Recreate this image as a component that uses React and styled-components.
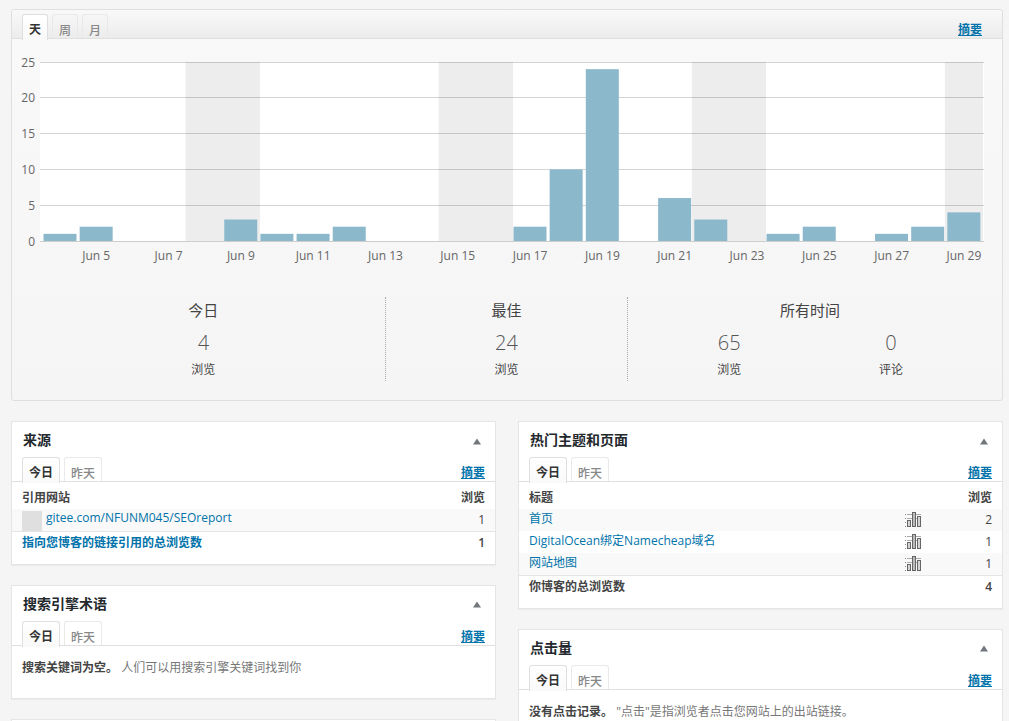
import React, { useState } from 'react'
import styled, { createGlobalStyle } from 'styled-components'

const GlobalStyle = createGlobalStyle`
  * {
    box-sizing: border-box;
  }
  body {
    margin: 0;
    background: #f5f5f5;
    color: #444;
    font-family: "Open Sans", "Noto Sans CJK SC", sans-serif;
    font-size: 12px;
    line-height: 18px;
  }
  button {
    font-family: inherit;
  }
`;

const Page = styled.main`
  padding: 9px 6px 20px 11px;
`;

const Overview = styled.section`
  border: 1px solid #dfdfdf;
  border-radius: 3px;
  background: linear-gradient(#f9f9f9, #f5f5f5);
  margin-bottom: 20px;
`;

const TabBar = styled.div`
  display: flex;
  align-items: flex-end;
  justify-content: space-between;
  padding: 0 10px;
  border-bottom: 1px solid #dfdfdf;
`;

const OverviewBar = styled(TabBar)`
  padding: 4px 20px 0 10px;
  border-radius: 3px 3px 0 0;
  background: linear-gradient(#f9f9f9, #ececec);
`;

const TabList = styled.div`
  display: flex;
  gap: 4px;
  margin-bottom: -2px;
`;

const Tab = styled.button`
  height: ${({ $active }) => ($active ? '26px' : '24px')};
  padding: ${({ $active }) => ($active ? '5px 6px 0' : '6px 6px 0')};
  border: 1px solid ${({ $active }) => ($active ? '#dfdfdf' : '#e9e9e9')};
  border-bottom: 0;
  border-radius: 3px 3px 0 0;
  background: ${({ $active, $bg }) => ($active ? $bg : 'transparent')};
  color: ${({ $active }) => ($active ? '#333' : '#888')};
  font-size: 12px;
  font-weight: ${({ $active }) => ($active ? 700 : 500)};
  line-height: 20px;
  cursor: pointer;
`;

const SummaryLink = styled.a`
  color: #0073aa;
  font-weight: 700;
  line-height: 16px;
`;

const Chart = styled.svg`
  display: block;
  width: 100%;
  height: auto;

  text {
    font-size: 12px;
    fill: #666;
  }
`;

const Stats = styled.div`
  display: grid;
  grid-template-columns: 3fr 2fr 3fr;
  padding: 28px 10px 19px;
`;

const StatGroup = styled.div`
  height: 84px;
  text-align: center;
  border-right: 1px dotted #aaa;

  &:last-child {
    border-right: 0;
    padding: 0 20px;
  }
`;

const StatTitle = styled.h3`
  margin: 0;
  font-size: 15px;
  font-weight: 400;
  line-height: 26px;
`;

const StatRow = styled.div`
  display: flex;
`;

const Stat = styled.div`
  flex: 1;
`;

const Count = styled.div`
  font-size: 20px;
  font-weight: 300;
  line-height: 24px;
  padding: 8px 0 6px;
  color: #555;
`;

const Columns = styled.div`
  display: grid;
  grid-template-columns: 1fr 1fr;
  gap: 22px;
  align-items: start;
`;

const Column = styled.div`
  display: flex;
  flex-direction: column;
  gap: 20px;
`;

const Box = styled.section`
  min-height: 24px;
  border: 1px solid #e5e5e5;
  background: #fff;
  box-shadow: 0 1px 1px rgba(0, 0, 0, 0.04);
`;

const BoxHeader = styled.header`
  display: flex;
  align-items: center;
  justify-content: space-between;
  height: 35px;
  padding: 1px 14px 0 11px;
`;

const BoxTitle = styled.h2`
  margin: 0;
  color: #23282d;
  font-size: 14px;
  font-weight: 700;
  line-height: 20px;
`;

const Toggle = styled.button`
  display: flex;
  padding: 2px 0 0;
  border: 0;
  background: none;
  cursor: pointer;
`;

const Table = styled.table`
  width: 100%;
  border-collapse: collapse;

  th, td {
    height: 22px;
    padding: 0;
    line-height: 20px;
    text-align: left;
    vertical-align: top;
  }
  th:first-child, td:first-child {
    padding-left: 10px;
  }
  th:last-child, td:last-child {
    width: 40px;
    padding-right: 10px;
    text-align: right;
  }
  thead th {
    height: 27px;
    padding-top: 6px;
  }
  tbody tr:nth-child(odd) {
    background: #f9f9f9;
  }
  tbody td:last-child {
    line-height: 22px;
  }
  tfoot th, tfoot td {
    height: 32px;
    border-top: 1px solid #e5e5e5;
    font-weight: 600;
    line-height: 22px;
  }
  tfoot th {
    font-weight: 700;
  }
  a {
    color: #0073aa;
    text-decoration: none;
  }
`;

const IconCell = styled.td`
  width: 57px;

  svg {
    display: block;
    margin-top: 3px;
  }
`;

const Referrer = styled.div`
  display: flex;
  gap: 4px;
  height: 22px;
  line-height: 18px;
`;

const Favicon = styled.span`
  width: 20px;
  height: 20px;
  margin-top: 2px;
  background: #dfdfdf;
`;

const Empty = styled.p`
  margin: 0;
  padding: 13px 10px 21px;
  color: #777;

  strong {
    color: #444;
  }
`;

const views = [1, 2, 0, 0, 0, 3, 1, 1, 2, 0, 0, 0, 0, 2, 10, 24, 0, 6, 3, 0, 1, 2, 0, 1, 2, 4];
const firstDay = 4;
const weekends = [[8, 2], [15, 2], [22, 2], [29, 1]];
const ticks = [25, 20, 15, 10, 5, 0];

const plot = { left: 28, right: 972, top: 23, bottom: 202 };
const step = (plot.right - plot.left - 4) / views.length;
const dayX = (day) => plot.left + 2 + (day - firstDay) * step;
const valueY = (value) => plot.bottom - (value * (plot.bottom - plot.top)) / 25;

const ViewsChart = () => (
  <Chart viewBox="0 0 990 230" role="img" aria-label="浏览">
    <rect x={plot.left} y={plot.top} width={plot.right - plot.left} height={plot.bottom - plot.top} fill="#fff" />
    {weekends.map(([day, days]) => (
      <rect
        key={day}
        x={dayX(day) - 1}
        y={plot.top}
        width={days * step + 2}
        height={plot.bottom - plot.top}
        fill="#ededed"
      />
    ))}
    {ticks.map((tick) => (
      <g key={tick}>
        <rect x={plot.left} y={Math.floor(valueY(tick))} width={plot.right - plot.left} height="1" fill="#000" opacity="0.17" />
        <text x={plot.left - 5} y={Math.floor(valueY(tick)) + 5} textAnchor="end">{tick}</text>
      </g>
    ))}
    {views.map((count, i) => count > 0 && (
      <rect key={i} x={dayX(firstDay + i) + 1.5} y={valueY(count)} width="33" height={plot.bottom - valueY(count)} fill="#8cb8cc" />
    ))}
    {views.map((count, i) => i % 2 === 1 && (
      <text key={i} x={dayX(firstDay + i) + step / 2} y="221" textAnchor="middle">Jun {firstDay + i}</text>
    ))}
  </Chart>
);

const BarsIcon = () => (
  <svg width="17" height="16" viewBox="0 0 17 16" shapeRendering="crispEdges" aria-hidden="true">
    <g fill="#888">
      <rect x="0" y="2" width="1" height="1" />
      <rect x="0" y="6" width="1" height="1" />
      <rect x="0" y="10" width="1" height="1" />
      <rect x="0" y="14" width="1" height="1" />
      <rect x="2" y="2" width="14" height="1" fill="#aaa" />
      <rect x="2" y="6" width="14" height="1" fill="#aaa" />
    </g>
    <g fill="#d4d4d4" stroke="#666">
      <rect x="2.5" y="8.5" width="3" height="6" />
      <rect x="7.5" y="0.5" width="3" height="14" fill="#bbb" />
      <rect x="12.5" y="4.5" width="3" height="10" />
    </g>
  </svg>
);

const Tabs = ({ labels, bg }) => {
  const [active, setActive] = useState(0);
  return (
    <TabList role="tablist">
      {labels.map((label, i) => (
        <Tab key={label} type="button" role="tab" aria-selected={i === active} $active={i === active} $bg={bg} onClick={() => setActive(i)}>
          {label}
        </Tab>
      ))}
    </TabList>
  );
};

const StatsBox = ({ title, children }) => {
  const [open, setOpen] = useState(true);
  return (
    <Box>
      <BoxHeader>
        <BoxTitle>{title}</BoxTitle>
        <Toggle type="button" aria-label={title} aria-expanded={open} onClick={() => setOpen(!open)}>
          <svg width="8" height="7" viewBox="0 0 8 7"><path d="M4 0.5L8 6.5H0z" fill="#72777c" /></svg>
        </Toggle>
      </BoxHeader>
      {open && (
        <>
          <TabBar>
            <Tabs labels={['今日', '昨天']} bg="linear-gradient(#fff, #f9f9f9)" />
            <SummaryLink href="#summary">摘要</SummaryLink>
          </TabBar>
          {children}
        </>
      )}
    </Box>
  );
};

const posts = [
  { title: '首页', count: 2 },
  { title: 'DigitalOcean绑定Namecheap域名', count: 1 },
  { title: '网站地图', count: 1 },
];

const App = () => {
  return (
    <>
      <GlobalStyle />
      <Page>
        <Overview>
          <OverviewBar>
            <Tabs labels={['天', '周', '月']} bg="linear-gradient(#fff, #f9f9f9)" />
            <SummaryLink href="#summary">摘要</SummaryLink>
          </OverviewBar>
          <ViewsChart />
          <Stats>
            <StatGroup>
              <StatTitle>今日</StatTitle>
              <Count>4</Count>
              浏览
            </StatGroup>
            <StatGroup>
              <StatTitle>最佳</StatTitle>
              <Count>24</Count>
              浏览
            </StatGroup>
            <StatGroup>
              <StatTitle>所有时间</StatTitle>
              <StatRow>
                <Stat>
                  <Count>65</Count>
                  浏览
                </Stat>
                <Stat>
                  <Count>0</Count>
                  评论
                </Stat>
              </StatRow>
            </StatGroup>
          </Stats>
        </Overview>

        <Columns>
          <Column>
            <StatsBox title="来源">
              <Table>
                <thead>
                  <tr><th>引用网站</th><th>浏览</th></tr>
                </thead>
                <tbody>
                  <tr>
                    <td>
                      <Referrer>
                        <Favicon />
                        <a href="#referrer">gitee.com/NFUNM045/SEOreport</a>
                      </Referrer>
                    </td>
                    <td>1</td>
                  </tr>
                </tbody>
                <tfoot>
                  <tr><th><a href="#total">指向您博客的链接引用的总浏览数</a></th><td>1</td></tr>
                </tfoot>
              </Table>
            </StatsBox>
            <StatsBox title="搜索引擎术语">
              <Empty><strong>搜索关键词为空。</strong> 人们可以用搜索引擎关键词找到你</Empty>
            </StatsBox>
            <Box />
          </Column>

          <Column>
            <StatsBox title="热门主题和页面">
              <Table>
                <thead>
                  <tr><th colSpan="2">标题</th><th>浏览</th></tr>
                </thead>
                <tbody>
                  {posts.map(({ title, count }) => (
                    <tr key={title}>
                      <td><a href="#post">{title}</a></td>
                      <IconCell><a href="#stats" aria-label={title}><BarsIcon /></a></IconCell>
                      <td>{count}</td>
                    </tr>
                  ))}
                </tbody>
                <tfoot>
                  <tr><th colSpan="2">你博客的总浏览数</th><td>4</td></tr>
                </tfoot>
              </Table>
            </StatsBox>
            <StatsBox title="点击量">
              <Empty><strong>没有点击记录。</strong> "点击"是指浏览者点击您网站上的出站链接。</Empty>
            </StatsBox>
          </Column>
        </Columns>
      </Page>
    </>
  )
}

export default App
